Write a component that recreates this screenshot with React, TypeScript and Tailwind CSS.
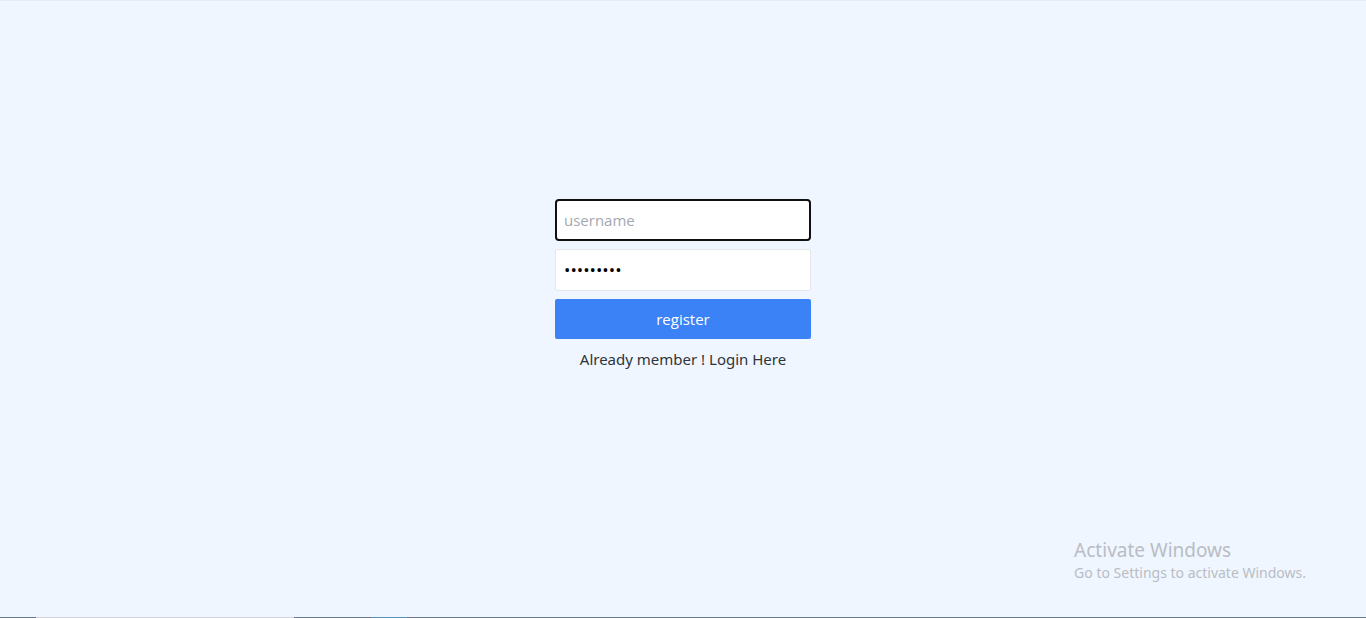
import { useState } from "react";

export default function App() {
  const [username, setUsername] = useState("");
  const [password, setPassword] = useState("secret123");

  return (
    <div className="relative flex min-h-screen flex-col border-t border-[#e8ebf3] bg-[#eff6ff] font-['Noto_Sans','Segoe_UI',sans-serif] text-[15px] leading-6">
      <main className="flex grow items-center justify-center">
        <form className="mb-12 w-64" onSubmit={(event) => event.preventDefault()}>
          <input
            type="text"
            aria-label="username"
            placeholder="username"
            autoFocus
            value={username}
            onChange={(event) => setUsername(event.target.value)}
            className="mb-2 block w-full rounded-xs border border-[#e5e7eb] bg-white p-2 font-['Open_Sans','Segoe_UI',sans-serif] text-black caret-transparent placeholder:text-[#a3a8b2] focus:rounded-sm focus:border-2 focus:border-[#101010] focus:px-[7px] focus:py-[7px] focus:outline-none"
          />
          <input
            type="password"
            aria-label="password"
            placeholder="password"
            value={password}
            onChange={(event) => setPassword(event.target.value)}
            className="mb-2 block w-full rounded-xs border border-[#e5e7eb] bg-white p-2 font-['Open_Sans','Segoe_UI',sans-serif] text-[17px] leading-6 text-black"
          />
          <button type="submit" className="block w-full rounded-xs bg-[#3b82f6] p-2 font-['Open_Sans','Segoe_UI',sans-serif] text-white">
            register
          </button>
          <div className="mt-2 text-center text-[#30343a]">
            Already member ! <a href="#login">Login Here</a>
          </div>
        </form>
      </main>
      <aside className="absolute right-[60px] bottom-[34px] text-[#b9bdc3]">
        <p className="text-[19px] leading-6">Activate Windows</p>
        <p className="text-sm leading-[22px]">Go to Settings to activate Windows.</p>
      </aside>
      <div className="flex h-px bg-[#6b7789]">
        <span className="ml-9 w-[258px] bg-[#d0d3dc]" />
        <span className="ml-[77px] w-9 bg-[#5593c4]" />
      </div>
    </div>
  );
}
